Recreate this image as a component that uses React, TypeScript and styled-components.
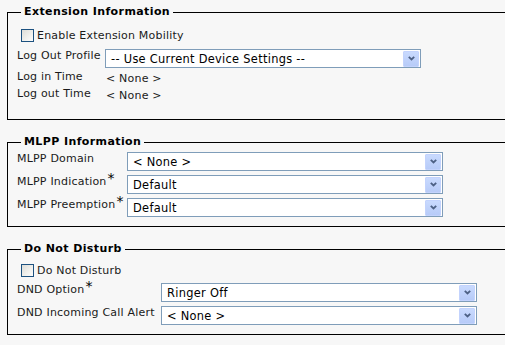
import React from "react";
import styled, { createGlobalStyle } from "styled-components";

const GlobalStyle = createGlobalStyle`
  html, body {
    margin: 0;
    padding: 0;
    background: #f7f7f7;
    overflow: hidden;
  }
  body {
    font-family: "DejaVu Sans", Verdana, sans-serif;
    font-size: 11px;
    letter-spacing: 0.2px;
    color: #1a1a1a;
  }
`;

const Page = styled.div`
  display: flex;
  flex-direction: column;
  gap: 14px;
  padding: 4px 0 0 7px;
  width: 530px;
`;

interface FieldsetProps {
  $labelWidth: number;
  $bottom: number;
}

const Fieldset = styled.fieldset<FieldsetProps>`
  --label-w: ${(p) => p.$labelWidth}px;
  margin: 0;
  min-width: 0;
  padding: 0 0 ${(p) => p.$bottom}px 9px;
  border: 1px solid #000;
`;

const Legend = styled.legend`
  margin-left: 4px;
  padding: 0 3px;
  font-weight: bold;
  line-height: 16px;
  letter-spacing: 0.4px;
  color: #000;
`;

interface CheckRowProps {
  $height: number;
  $top: number;
}

const CheckRow = styled.label<CheckRowProps>`
  display: flex;
  align-items: flex-start;
  gap: 3px;
  box-sizing: border-box;
  height: ${(p) => p.$height}px;
  padding: ${(p) => p.$top}px 0 0 4px;
  line-height: 14px;
`;

const Checkbox = styled.span`
  width: 13px;
  height: 13px;
  box-sizing: border-box;
  flex: none;
  border: 1px solid #1c5180;
  background: linear-gradient(135deg, #dcdcd7 0%, #f1f1ee 60%, #fdfdfd 100%);
`;

const FieldRow = styled.div`
  display: grid;
  grid-template-columns: var(--label-w) auto;
  align-items: start;
  box-sizing: border-box;
  height: 23px;
  padding-top: 2px;
`;

const TextRow = styled.div`
  display: grid;
  grid-template-columns: var(--label-w) auto;
  height: 17px;
  line-height: 17px;
`;

const Label = styled.span`
  line-height: 14px;
  white-space: nowrap;
`;

const Value = styled.span`
  padding-left: 1px;
`;

const Required = styled.sup`
  font-size: 14px;
  line-height: 0;
  margin-left: 1px;
  vertical-align: 2px;
  color: #000;
`;

const Select = styled.div`
  display: flex;
  align-items: center;
  justify-content: space-between;
  box-sizing: border-box;
  width: 316px;
  height: 19px;
  padding: 0 1px 0 5px;
  border: 1px solid #7f9db9;
  background: #fff;
  color: #000;
  font-size: 11.4px;
  letter-spacing: 0.3px;
  white-space: nowrap;
`;

const SelectText = styled.span`
  padding-top: 1px;
`;

const ArrowButton = styled.span`
  display: flex;
  align-items: center;
  justify-content: center;
  box-sizing: border-box;
  width: 16px;
  height: 16px;
  border: 1px solid #c3d3fd;
  border-radius: 1px;
  background: linear-gradient(#c9dafe, #b7cbf8);
  color: #4d6185;
`;

const Chevron = () => (
  <svg width="7" height="5" viewBox="0 0 7 5">
    <polyline points="0.8,0.8 3.5,3.5 6.2,0.8" fill="none" stroke="currentColor" strokeWidth="1.8" />
  </svg>
);

const Dropdown = ({ value }: { value: string }) => (
  <Select>
    <SelectText>{value}</SelectText>
    <ArrowButton>
      <Chevron />
    </ArrowButton>
  </Select>
);

const Field = ({ label, value, required }: { label: string; value: string; required?: boolean }) => (
  <FieldRow>
    <Label>
      {label}
      {required && <Required>*</Required>}
    </Label>
    <Dropdown value={value} />
  </FieldRow>
);

export default function App() {
  return (
    <>
      <GlobalStyle />
      <Page>
        <Fieldset $labelWidth={88} $bottom={15}>
          <Legend>Extension Information</Legend>
          <CheckRow $height={27} $top={9}>
            <Checkbox />
            Enable Extension Mobility
          </CheckRow>
          <Field label="Log Out Profile" value="-- Use Current Device Settings --" />
          <TextRow>
            <Label>Log in Time</Label>
            <Value>&lt; None &gt;</Value>
          </TextRow>
          <TextRow>
            <Label>Log out Time</Label>
            <Value>&lt; None &gt;</Value>
          </TextRow>
        </Fieldset>

        <Fieldset $labelWidth={110} $bottom={7}>
          <Legend>MLPP Information</Legend>
          <Field label="MLPP Domain" value="< None >" />
          <Field label="MLPP Indication" value="Default" required />
          <Field label="MLPP Preemption" value="Default" required />
        </Fieldset>

        <Fieldset $labelWidth={144} $bottom={7}>
          <Legend>Do Not Disturb</Legend>
          <CheckRow $height={24} $top={7}>
            <Checkbox />
            Do Not Disturb
          </CheckRow>
          <Field label="DND Option" value="Ringer Off" required />
          <Field label="DND Incoming Call Alert" value="< None >" />
        </Fieldset>
      </Page>
    </>
  );
}
